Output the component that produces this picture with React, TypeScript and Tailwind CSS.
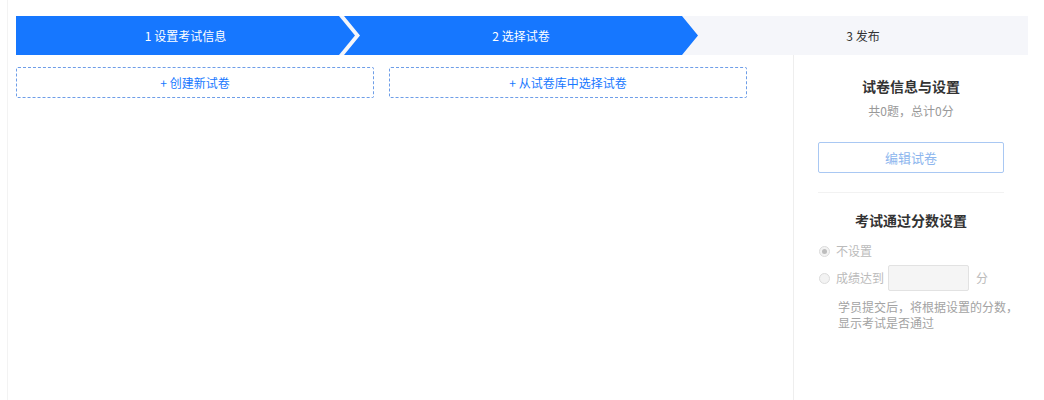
import React from "react";

const font = { fontFamily: '"Noto Sans CJK SC", "Noto Sans", sans-serif' };

function Steps() {
  return (
    <div className="flex h-[39px] w-[1012px] bg-[#f5f6fa] text-xs">
      <div
        className="flex w-[339px] shrink-0 items-center justify-center bg-[#1677ff] text-white"
        style={{ clipPath: "polygon(0 0, calc(100% - 16px) 0, 100% 50%, calc(100% - 16px) 100%, 0 100%)" }}
      >
        1 设置考试信息
      </div>
      <div
        className="ml-[-11px] flex w-[354px] shrink-0 items-center justify-center bg-[#1677ff] text-white"
        style={{ clipPath: "polygon(0 0, calc(100% - 16px) 0, 100% 50%, calc(100% - 16px) 100%, 0 100%, 16px 50%)" }}
      >
        2 选择试卷
      </div>
      <div className="flex flex-1 items-center justify-center text-[#333]">3 发布</div>
    </div>
  );
}

function Radio({ checked, label }: { checked?: boolean; label: string }) {
  return (
    <div className="flex items-center gap-[6px]">
      <span className="flex h-[11px] w-[11px] items-center justify-center rounded-full border border-[#dcdcdc] bg-[#f3f3f3]">
        {checked && <span className="h-[5px] w-[5px] rounded-full bg-[#bdbdbd]" />}
      </span>
      <span className="text-xs text-[#bbb]">{label}</span>
    </div>
  );
}

export default function App() {
  return (
    <div className="h-[400px] w-[1044px] bg-white" style={font}>
      <div className="ml-[7px] h-full border-l border-[#f3f3f3] pl-[8px] pt-4">
        <Steps />
        <div className="flex h-[345px] w-[1012px]">
          <div className="flex flex-1 gap-[15px] pt-3">
            <button className="h-[31px] w-[358px] rounded-[2px] border border-dashed border-[#6e9ee8] text-xs text-[#1677ff]">
              + 创建新试卷
            </button>
            <button className="h-[31px] w-[358px] rounded-[2px] border border-dashed border-[#6e9ee8] text-xs text-[#1677ff]">
              + 从试卷库中选择试卷
            </button>
          </div>
          <div className="flex w-[235px] flex-col border-l border-[#eeeeee] px-6 pt-[21px]">
            <div className="text-center text-sm font-bold text-[#333]">试卷信息与设置</div>
            <div className="mt-[7px] text-center text-xs text-[#999]">共0题，总计0分</div>
            <button className="mt-[23px] h-[31px] w-full rounded-[2px] border border-[#a9c8f3] text-[13px] text-[#8db6ee]">
              编辑试卷
            </button>
            <div className="mt-[19px] border-t border-[#f2f2f2]" />
            <div className="mt-[17px] text-center text-sm font-bold text-[#333]">考试通过分数设置</div>
            <div className="mt-[13px] pl-[1px]">
              <Radio checked label="不设置" />
            </div>
            <div className="mt-[6px] flex items-center pl-[1px]">
              <Radio label="成绩达到" />
              <span className="ml-[4px] h-[26px] w-[81px] rounded-[2px] border border-[#e2e2e2] bg-[#f5f5f5]" />
              <span className="ml-[7px] text-xs text-[#bbb]">分</span>
            </div>
            <div className="mt-[8px] whitespace-nowrap pl-[20px] text-xs leading-[16px] text-[#a3a3a3]">
              学员提交后，将根据设置的分数，
              <br />
              显示考试是否通过
            </div>
          </div>
        </div>
      </div>
    </div>
  );
}
